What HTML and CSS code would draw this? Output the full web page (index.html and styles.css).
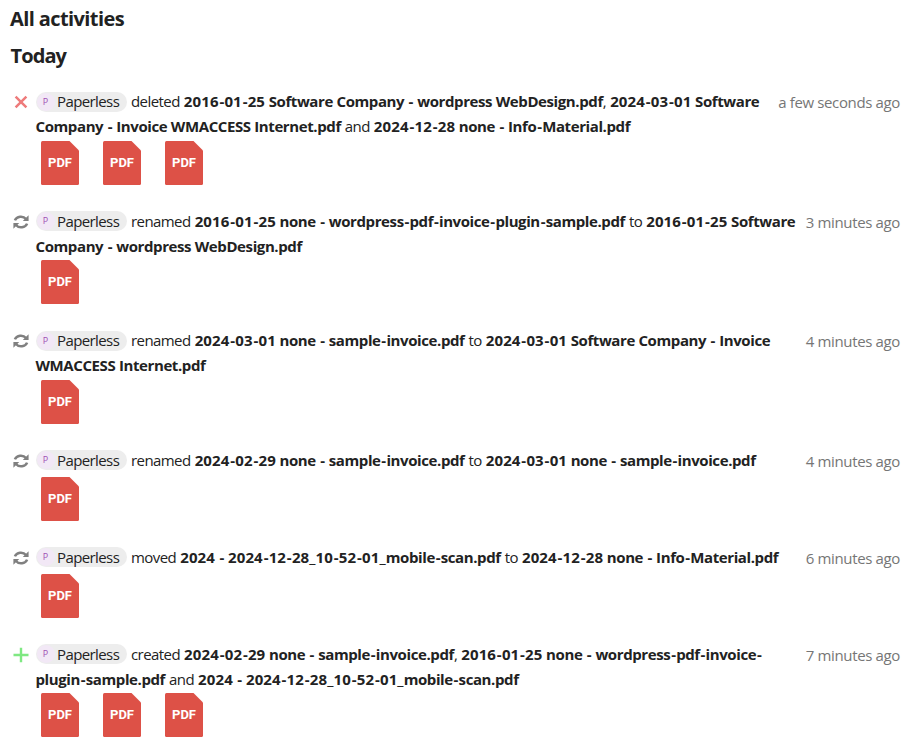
FILE: index.html
```
<!DOCTYPE html>
<html lang="en">
<head>
<meta charset="utf-8">
<title>All activities</title>
<link rel="stylesheet" href="styles.css">
</head>
<body>
<svg class="sprite" aria-hidden="true">
  <symbol id="delete" viewBox="0 0 16 16"><path d="M2.600 2.600 13.400 13.400M13.400 2.600 2.600 13.400" fill="none" stroke="#ee7b7b" stroke-width="2.500"/></symbol>
  <symbol id="create" viewBox="0 0 16 16"><path d="M8 .7V15.300M.5 8H15.500" fill="none" stroke="#7fe882" stroke-width="2.400"/></symbol>
  <symbol id="change" viewBox="0 0 16 16"><path d="M1.900 6.400A6.300 5.500 0 0 1 13 5M14.100 9.600A6.300 5.500 0 0 1 3 11" fill="none" stroke="#808080" stroke-width="2.500"/><path d="M15.600 1.300V7H9.800ZM.4 14.700V9H6.200Z" fill="#808080"/></symbol>
  <symbol id="pdf" viewBox="0 0 38 44"><path d="M1.500 0H28.500L38 9.500V42.500Q38 44 36.500 44H1.500Q0 44 0 42.500V1.500Q0 0 1.500 0Z" fill="#dd5147"/></symbol>
</svg>
<main class="feed">
  <h2 class="title">All activities</h2>
  <h2 class="day">Today</h2>
  <section class="list" id="list"></section>
</main>
<script src="app.js"></script>
</body>
</html>
```
FILE: app.js
```
const activities = [
  { icon: 'delete', time: 'a few seconds ago', files: 3, lines: [
    'deleted <b>2016-01-25 Software Company - wordpress WebDesign.pdf</b>, <b>2024-03-01 Software</b>',
    '<b>Company - Invoice WMACCESS Internet.pdf</b> and <b>2024-12-28 none - Info-Material.pdf</b>'] },
  { icon: 'change', time: '3 minutes ago', files: 1, lines: [
    'renamed <b>2016-01-25 none - wordpress-pdf-invoice-plugin-sample.pdf</b> to <b>2016-01-25 Software</b>',
    '<b>Company - wordpress WebDesign.pdf</b>'] },
  { icon: 'change', time: '4 minutes ago', files: 1, lines: [
    'renamed <b>2024-03-01 none - sample-invoice.pdf</b> to <b>2024-03-01 Software Company - Invoice</b>',
    '<b>WMACCESS Internet.pdf</b>'] },
  { icon: 'change', time: '4 minutes ago', files: 1, lines: [
    'renamed <b>2024-02-29 none - sample-invoice.pdf</b> to <b>2024-03-01 none - sample-invoice.pdf</b>'] },
  { icon: 'change', time: '6 minutes ago', files: 1, lines: [
    'moved <b>2024 - 2024-12-28_10-52-01_mobile-scan.pdf</b> to <b>2024-12-28 none - Info-Material.pdf</b>'] },
  { icon: 'create', time: '7 minutes ago', files: 3, lines: [
    'created <b>2024-02-29 none - sample-invoice.pdf</b>, <b>2016-01-25 none - wordpress-pdf-invoice-</b>',
    '<b>plugin-sample.pdf</b> and <b>2024 - 2024-12-28_10-52-01_mobile-scan.pdf</b>'] }
];
const chip = '<span class="chip"><span class="avatar">P</span><span class="name">Paperless</span></span>';
const file = '<span class="file"><svg class="sheet"><use href="#pdf"/></svg><span class="ext">PDF</span></span>';
// Numerals and hyphens in file names are set a little looser than letters.
const space = line => line.replace(/[\d_]+|-/g, m => `<span class="${m === '-' ? 'hyphen' : 'digits'}">${m}</span>`);
document.getElementById('list').innerHTML = activities.map(a => `
  <article class="activity">
    <svg class="kind"><use href="#${a.icon}"/></svg>
    <div class="body">
      ${a.lines.map((l, i) => `<div class="line">${i ? '' : chip}<span class="text">${space(l)}</span></div>`).join('')}
      <div class="files">${file.repeat(a.files)}</div>
    </div>
    <time class="time">${a.time}</time>
  </article>`).join('');
```
FILE: styles.css
```
body { margin: 0; background: #fff; color: #222; font: 15px/22.5px "Open Sans", "Noto Sans", sans-serif; }
.sprite { display: none; }
.feed { padding: 0 14px 0 10px; }
.title, .day { margin: 0; font-size: 20px; font-weight: 700; letter-spacing: -.6px; height: 37px; line-height: 38px; }
.day { padding-left: .5px; letter-spacing: -.9px; }
.list { padding-top: 15px; }
.activity { display: flex; padding-bottom: 26px; }
.kind { width: 16px; height: 16px; margin: 5px 10px 0 3px; flex: none; }
.body { flex: none; margin-left: -3.500px; width: 740px; }
.line { display: flex; align-items: center; box-sizing: border-box; height: 22.500px; white-space: nowrap; }
.line:first-child { height: 25px; }
.line + .line { padding-top: 2px; }
.text { flex: none; letter-spacing: -.57px; word-spacing: .7px; }
.text b { font-weight: 700; letter-spacing: -.4px; word-spacing: .1px; }
.text .digits { letter-spacing: .12px; }
.text .hyphen { padding: 0 .8px; letter-spacing: -.6px; }
.chip { display: flex; flex: none; align-items: center; width: 91px; height: 20px; margin-right: 4.500px; border-radius: 10px; background: #ededed; }
.avatar { flex: none; width: 18px; height: 18px; margin-left: 1px; border-radius: 50%; background: #f2e8f6; color: #a04fb4; font-size: 9px; line-height: 18px; text-align: center; }
.name { margin-left: 2.500px; letter-spacing: -.6px; }
.files { display: flex; gap: 24px; padding: 4px 0 0 5.500px; height: 42px; }
.file { display: grid; width: 38px; height: 44px; place-items: center; }
.sheet, .ext { grid-area: 1 / 1; }
.sheet { width: 38px; height: 44px; }
.ext { color: #fff; font: 700 13px/44px Roboto, sans-serif; }
.time { margin-left: auto; padding-top: 2px; color: #767676; letter-spacing: -.36px; white-space: nowrap; }
```
